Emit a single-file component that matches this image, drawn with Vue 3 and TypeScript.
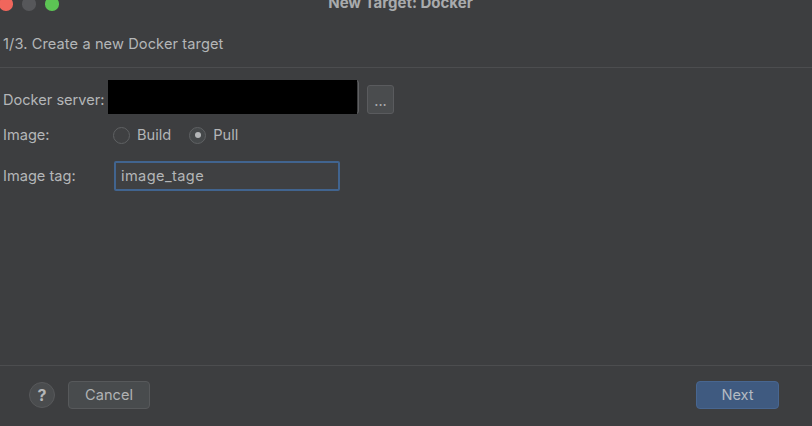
<template>
  <div class="dialog">
    <header class="titlebar">
      <div class="lights">
        <span class="light red"></span>
        <span class="light gray"></span>
        <span class="light green"></span>
      </div>
      <div class="title">New Target: Docker</div>
    </header>

    <div class="step">1/3. Create a new Docker target</div>

    <main class="form">
      <div class="row server-row">
        <label class="label">Docker server:</label>
        <div class="server-field">
          <div class="select-edge"></div>
          <div class="redaction"></div>
        </div>
        <button class="browse" type="button">...</button>
      </div>

      <div class="row image-row">
        <label class="label">Image:</label>
        <div class="radios">
          <span v-for="opt in imageOptions" :key="opt" class="radio-item">
            <span class="radio" :class="{ 'is-on': opt === selected }"></span>
            <span>{{ opt }}</span>
          </span>
        </div>
      </div>

      <div class="row tag-row">
        <label class="label">Image tag:</label>
        <div class="tag-input">image_tage</div>
      </div>
    </main>

    <footer class="footer">
      <div class="footer-left">
        <button class="help" type="button">?</button>
        <button class="btn cancel" type="button">Cancel</button>
      </div>
      <button class="btn primary" type="button">Next</button>
    </footer>
  </div>
</template>

<script setup lang="ts">
const imageOptions: string[] = ['Build', 'Pull']
const selected = 'Pull'
</script>

<style>
html,
body {
  margin: 0;
  background: #3d3e40;
}
</style>

<style scoped>
.dialog {
  width: 812px;
  height: 426px;
  overflow: hidden;
  display: flex;
  flex-direction: column;
  background: #3d3e40;
  color: #b4b6b8;
  font-family: Inter, "Liberation Sans", sans-serif;
  font-size: 14.6px;
  box-sizing: border-box;
}

.titlebar {
  height: 22px;
  position: relative;
  flex: none;
}

.lights {
  display: flex;
  gap: 9.5px;
  margin-top: -3px;
  margin-left: -1px;
}

.light {
  width: 13.5px;
  height: 13.5px;
  border-radius: 50%;
}

.red { background: #f0665c; }
.gray { background: #56575a; }
.green { background: #5cc454; }

.title {
  position: absolute;
  left: 0;
  width: 801px;
  top: -6px;
  text-align: center;
  font-weight: 700;
  font-size: 15px;
  line-height: 18px;
  color: #a9abad;
}

.step {
  height: 46px;
  flex: none;
  box-sizing: border-box;
  padding: 13px 0 0 3px;
  line-height: 18px;
  border-bottom: 1px solid #4c4d4f;
  letter-spacing: 0.1px;
}

.form {
  flex: 1;
  padding: 12px 0 0 3px;
  display: flex;
  flex-direction: column;
}

.row {
  display: flex;
  align-items: center;
}

.label {
  width: 105px;
  flex: none;
}

.server-row {
  height: 34px;
}

.server-row .label {
  margin-top: 6px;
}

.server-field {
  position: relative;
  width: 251px;
  height: 34px;
}

.select-edge {
  position: absolute;
  left: 8px;
  right: 0;
  top: 0;
  bottom: 0;
  border: 1px solid #606163;
  border-radius: 3px;
}

.redaction {
  position: absolute;
  left: 0;
  top: 0;
  width: 249px;
  height: 34px;
  background: #000;
}

.browse {
  width: 27px;
  height: 29px;
  margin: 5px 0 0 8px;
  padding: 0;
  border: 1px solid #5a5b5e;
  border-radius: 3px;
  background: #4a4c4e;
  color: #a8aaac;
  font: inherit;
  line-height: 30px;
}

.image-row {
  height: 24px;
  margin-top: 9px;
}

.radios {
  display: flex;
  gap: 18px;
  margin-left: 5px;
}

.radio-item {
  display: flex;
  align-items: center;
  gap: 7px;
}

.radio {
  width: 15px;
  height: 15px;
  border: 1px solid #5f6163;
  border-radius: 50%;
  background: #3f4042;
  display: flex;
  align-items: center;
  justify-content: center;
}

.radio.is-on {
  background: #45484a;
}

.radio.is-on::after {
  content: "";
  width: 6px;
  height: 6px;
  border-radius: 50%;
  background: #b4b6b8;
}

.tag-row {
  margin-top: 14px;
  height: 30px;
}

.tag-input {
  width: 226px;
  height: 30px;
  margin-left: 6px;
  box-sizing: border-box;
  border: 2.5px solid #41648f;
  border-radius: 2px;
  background: #3f4042;
  padding-left: 5px;
  line-height: 27px;
  letter-spacing: 0.4px;
}

.footer {
  height: 61px;
  flex: none;
  box-sizing: border-box;
  border-top: 1px solid #4c4d4f;
  padding: 15px 33px 0 29px;
  display: flex;
  justify-content: space-between;
  align-items: flex-start;
}

.footer-left {
  display: flex;
  align-items: center;
  gap: 13px;
}

.help {
  width: 26px;
  height: 26px;
  padding: 0;
  border: 1px solid #58595b;
  border-radius: 50%;
  background: #4a4c4e;
  color: #b4b6b8;
  font: inherit;
  font-weight: 700;
  font-size: 16px;
}

.btn {
  width: 83px;
  height: 28px;
  padding: 0;
  border: 1px solid #57595b;
  border-radius: 4px;
  background: #484b4d;
  color: #b0b2b4;
  font: inherit;
}

.btn.cancel {
  width: 82px;
}

.btn.primary {
  background: #3f5a80;
  border-color: #486690;
  color: #b4bac2;
}
</style>
